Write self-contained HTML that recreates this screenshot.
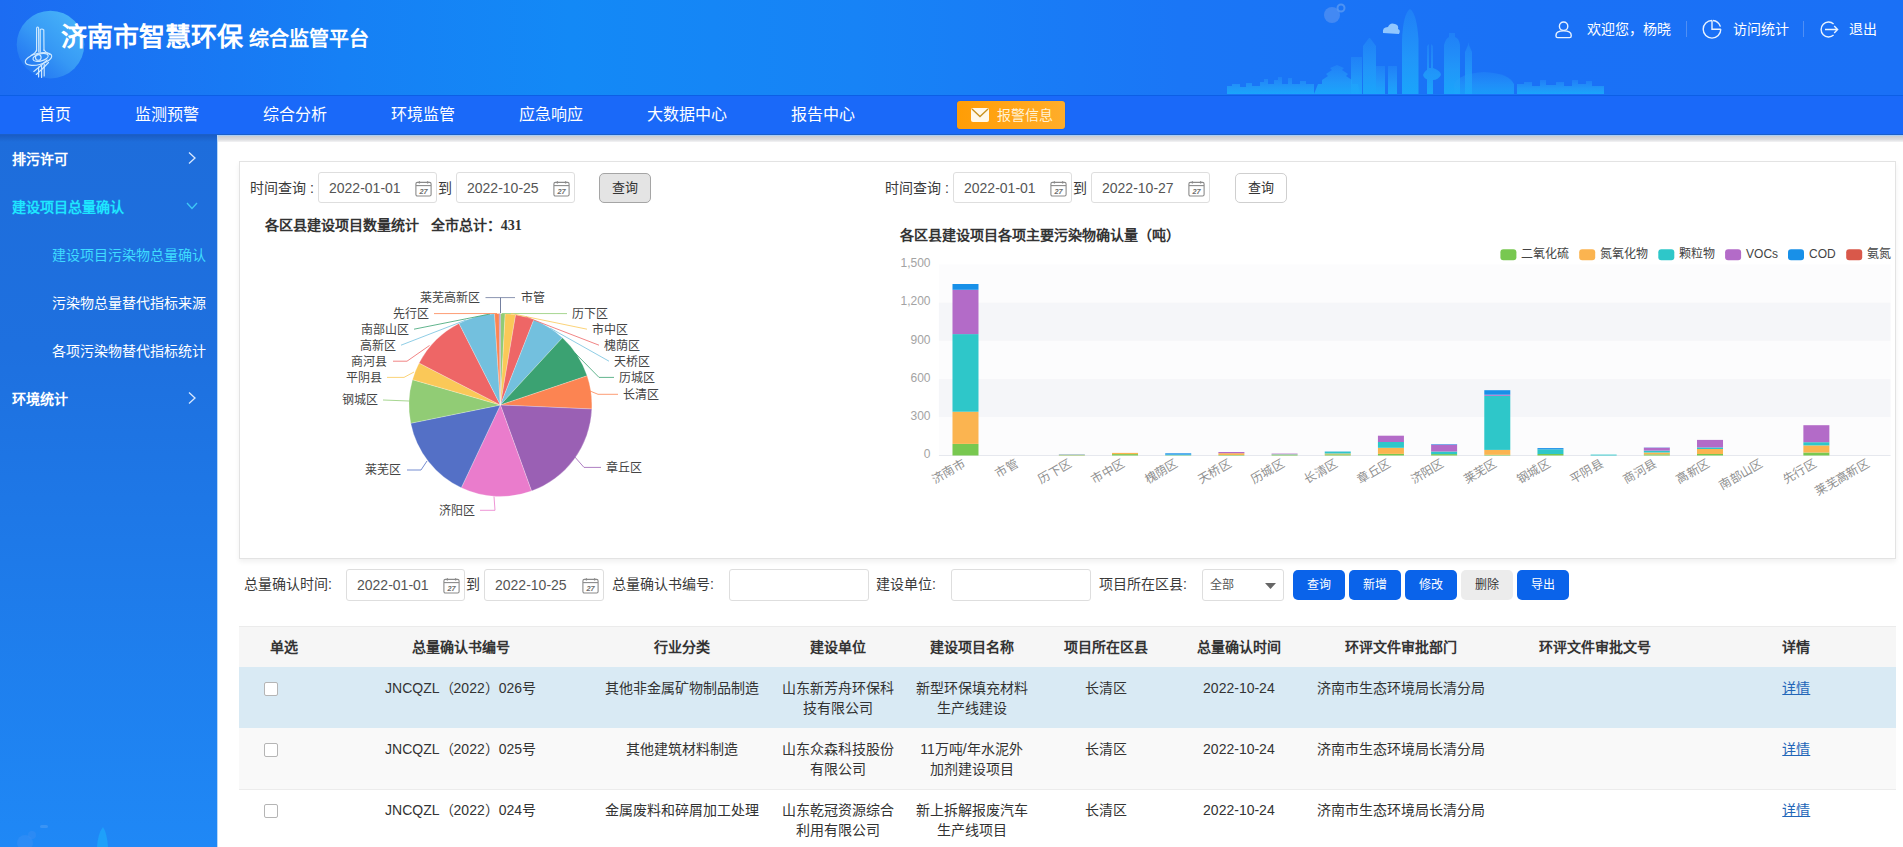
<!DOCTYPE html>
<html lang="zh-CN"><head><meta charset="utf-8">
<style>
*{margin:0;padding:0;box-sizing:border-box}
html,body{width:1903px;height:847px;overflow:hidden;background:#fff;font-family:"Liberation Sans",sans-serif;color:#333}
.abs{position:absolute}
#hdr{position:absolute;left:0;top:0;width:1903px;height:95px;background:linear-gradient(90deg,#1c6cf2 0%,#1680f5 18%,#1389f6 30%,#1783f6 45%,#1a76f6 62%,#1a71f6 80%,#1a70f6 100%)}
#nav{position:absolute;left:0;top:95px;width:1903px;height:40px;background:#1a69f9;border-top:1px solid #0c5fe6;border-bottom:1px solid #1b5fc9}
#nav .it{position:absolute;top:0;height:38px;line-height:37px;font-size:16px;color:#fff;white-space:nowrap}
#side{position:absolute;left:0;top:135px;width:217px;height:712px;background:linear-gradient(#1e6ddb 0%,#1e70df 30%,#1e7ae9 60%,#1f88f6 100%)}
#side .it{position:absolute;left:12px;font-size:14px;color:#fff;white-space:nowrap;line-height:20px}
#main{position:absolute;left:217px;top:135px;width:1686px;height:712px;background:#fff}
.lbl{font-size:14px;line-height:20px;color:#3a3a3a;white-space:nowrap}
.dinp{border:1px solid #dedede;border-radius:3px;background:#fff}
.th{width:300px;text-align:center;font-size:14px;font-weight:bold;color:#333;line-height:20px;white-space:nowrap}
.td{width:300px;text-align:center;font-size:14px;color:#333;line-height:20px;white-space:nowrap}
.cb{width:14px;height:14px;border:1px solid #b5b5b5;border-radius:2px;background:#fff}
svg text{font-family:"Liberation Sans",sans-serif}
</style></head><body>
<div id="hdr">
 <svg class="abs" style="left:0;top:0" width="1903" height="95">
  <defs>
   <linearGradient id="lg" x1="0.85" y1="0.1" x2="0.15" y2="0.9"><stop offset="0" stop-color="#46b2f9"/><stop offset="0.55" stop-color="#3698f5"/><stop offset="1" stop-color="#2a7ff2" stop-opacity="0.6"/></linearGradient>
   <linearGradient id="sk" x1="0" y1="0" x2="0" y2="1"><stop offset="0" stop-color="#2a9af9" stop-opacity="0.35"/><stop offset="0.6" stop-color="#22a0fa" stop-opacity="0.8"/><stop offset="1" stop-color="#1aa8fb" stop-opacity="0.95"/></linearGradient>
  </defs>
  <circle cx="50.5" cy="44.6" r="33.8" fill="url(#lg)"/>
  <g fill="none" stroke="#cfe9ff" stroke-width="1.15" stroke-linecap="round">
   <path d="M36.6 51 L36.6 28 Q37.6 26 38.6 28 L38.8 52"/>
   <path d="M40.2 52 L40.2 29.5 Q42 28.3 43.8 30 L44 50.5"/>
   <path d="M36.6 50 Q35.5 53.5 31 55.5"/><path d="M44 50 Q45.5 52.5 50 54.5"/>
   <ellipse cx="38.5" cy="59" rx="13.5" ry="5.6" transform="rotate(-14 38.5 59)"/>
   <ellipse cx="40.6" cy="57.4" rx="7.8" ry="3.6" transform="rotate(-14 40.6 57.4)"/>
   <circle cx="38.3" cy="57.4" r="2.8"/>
   <path d="M33.8 71.5 Q40 66.5 47.2 60"/><path d="M36.3 74.5 Q42.5 69 48.5 62.5"/>
   <path d="M38.6 67 L38.6 77"/><path d="M41.6 65.5 L41.6 77.5"/><path d="M44.2 64 L44.2 76"/>
  </g>
  <g fill="url(#sk)">
   <path d="M1227 94 L1227 86 L1232 86 L1232 84 L1240 84 L1240 87 L1246 87 L1246 83 L1252 83 L1252 86 L1260 86 L1260 82 L1264 82 L1264 79 L1268 79 L1268 84 L1274 84 L1274 80 L1278 80 L1278 77 L1282 77 L1282 84 L1288 84 L1288 78 L1292 78 L1292 84 L1300 84 L1300 81 L1306 81 L1306 84 L1314 84 L1314 94 Z"/>
   <path d="M1314 94 L1318 84 L1322 84 L1322 80 L1328 76 L1326 74 L1332 70 L1330 68 L1337 65 L1344 68 L1342 70 L1348 74 L1346 76 L1352 80 L1352 84 L1358 84 L1360 94 Z"/>
   <rect x="1351" y="57" width="11" height="37"/>
   <path d="M1363 94 L1363 46 L1369 38 L1370 38 L1376 46 L1376 94 Z"/>
   <rect x="1376" y="66" width="9" height="28"/>
   <rect x="1388" y="66" width="9" height="28"/>
   <path d="M1402 94 L1402 40 Q1403 14 1410 9 Q1417 14 1418.5 40 L1418.5 94 Z"/>
   <path d="M1427 94 L1427 46 L1429 44 L1429 68 L1431 68 L1431 44 L1433 46 L1433 68 Q1441 71 1441 75 Q1438 80 1433 80 L1433 94 Z M1423 75 Q1425 70 1429 69 L1429 80 Q1424 79 1423 75 Z"/>
   <path d="M1444 94 L1444 45 Q1446 38 1449 37 L1449 33 L1455 33 L1455 37 Q1459 38 1460 45 L1460 94 Z"/>
   <path d="M1465 94 L1465 52 L1468 45 L1468.5 42 L1469 45 L1472 52 L1472 94 Z"/>
   <path d="M1454 94 L1454 84 Q1460 73 1484 72 Q1509 73 1514 84 L1514 94 Z" opacity="0.8"/>
   <path d="M1517 94 L1517 84 L1524 84 L1524 82 L1532 82 L1532 86 L1540 86 L1540 80 L1546 80 L1546 85 L1556 85 L1556 82 L1564 82 L1564 86 L1572 86 L1572 80 L1578 80 L1578 84 L1586 84 L1586 81 L1592 81 L1592 86 L1604 86 L1604 94 Z"/>
  </g>
  <path d="M1383 33 Q1382 27 1388 27 Q1390 22 1395 24 Q1399 25 1398 29 Q1401 30 1399 34 Z" fill="#9fd0ff" opacity="0.9"/>
  <circle cx="1332" cy="15" r="8" fill="#4d8ff2" opacity="0.8"/>
  <circle cx="1341" cy="8" r="3.5" fill="none" stroke="#5a9af3" stroke-width="2" opacity="0.8"/>
  <!-- right icons -->
  <g fill="none" stroke="#e8f2ff" stroke-width="1.4">
   <circle cx="1563.6" cy="26.2" r="4.2"/>
   <path d="M1556 35.3 Q1556 30.9 1563.6 30.9 Q1571.2 30.9 1571.2 35.3 L1571.2 36 Q1571.2 37.6 1569.6 37.6 L1557.6 37.6 Q1556 37.6 1556 36 Z"/>
   <path d="M1712 20.5 A8.8 8.8 0 1 0 1720.8 29.3"/>
   <path d="M1712.8 20.5 A8.8 8.8 0 0 1 1720.4 26.6"/>
   <path d="M1712 20.5 L1712 29.3 L1720.8 29.3"/>
   <path d="M1833.6 23.9 A7.5 7.5 0 1 0 1833.6 35.1"/>
   <path d="M1825 29.5 L1837.6 29.5 M1834.2 26 L1837.6 29.5 L1834.2 33"/>
  </g>
  <rect x="1686" y="21" width="1" height="16" fill="#4f8ff5"/>
  <rect x="1803" y="21" width="1" height="16" fill="#4f8ff5"/>
 </svg>
 <div class="abs" style="left:61px;top:19px;font-size:26px;font-weight:900;color:#fff;white-space:nowrap;line-height:36px">济南市智慧环保</div>
 <div class="abs" style="left:249px;top:25px;font-size:20px;font-weight:900;color:#fff;white-space:nowrap;line-height:28px">综合监管平台</div>
 <div class="abs" style="left:1587px;top:19px;font-size:14px;color:#fff;white-space:nowrap;line-height:20px">欢迎您，杨晓</div>
 <div class="abs" style="left:1733px;top:19px;font-size:14px;color:#fff;white-space:nowrap;line-height:20px">访问统计</div>
 <div class="abs" style="left:1849px;top:19px;font-size:14px;color:#fff;white-space:nowrap;line-height:20px">退出</div>
</div>
<div id="nav">
 <div class="it" style="left:39px">首页</div>
 <div class="it" style="left:135px">监测预警</div>
 <div class="it" style="left:263px">综合分析</div>
 <div class="it" style="left:391px">环境监管</div>
 <div class="it" style="left:519px">应急响应</div>
 <div class="it" style="left:647px">大数据中心</div>
 <div class="it" style="left:791px">报告中心</div>
 <div class="abs" style="left:957px;top:5px;width:108px;height:28px;border-radius:3px;background:linear-gradient(90deg,#ff9d05,#ffad2a);box-shadow:0 0 1px rgba(0,0,0,.3)">
  <svg class="abs" style="left:14px;top:7px" width="18" height="14"><rect x="0" y="0" width="18" height="14" rx="2" fill="#fff8e8"/><path d="M1 1 L9 8.5 L17 1" fill="none" stroke="#c8901a" stroke-width="1.3"/></svg>
  <div class="abs" style="left:40px;top:4px;font-size:14px;line-height:20px;color:#fff3d6;white-space:nowrap">报警信息</div>
 </div>
</div>
<div id="side">
 <div class="abs" style="left:0;top:0;width:217px;height:7px;background:linear-gradient(#1a5cc4,rgba(30,111,220,0))"></div>
 <div class="it" style="top:14px;font-weight:bold">排污许可</div>
 <div class="it" style="top:62px;font-weight:bold;color:#1ee6ff">建设项目总量确认</div>
 <div class="it" style="top:110px;left:52px;color:#3fdcff">建设项目污染物总量确认</div>
 <div class="it" style="top:158px;left:52px">污染物总量替代指标来源</div>
 <div class="it" style="top:206px;left:52px">各项污染物替代指标统计</div>
 <div class="it" style="top:254px;font-weight:bold">环境统计</div>
 <svg class="abs" style="left:186px;top:16px" width="12" height="14"><path d="M3 1.5 L9 7 L3 12.5" fill="none" stroke="#d8e8ff" stroke-width="1.3"/></svg>
 <svg class="abs" style="left:185px;top:66px" width="14" height="10"><path d="M2 2 L7 7.5 L12 2" fill="none" stroke="#3fc8f5" stroke-width="1.3"/></svg>
 <svg class="abs" style="left:186px;top:256px" width="12" height="14"><path d="M3 1.5 L9 7 L3 12.5" fill="none" stroke="#d8e8ff" stroke-width="1.3"/></svg>
 <svg class="abs" style="left:0;top:690px" width="217" height="22"><circle cx="25" cy="18" r="8" fill="#3a8ff5" opacity="0.5"/><circle cx="32" cy="10" r="4" fill="#3a8ff5" opacity="0.45"/><rect x="40" y="0" width="8" height="3" rx="1.5" fill="#5aa3f7" opacity="0.45"/><path d="M97 22 Q98 8 103 2 Q107 8 108 22 Z" fill="#1ea6fb" opacity="0.8"/></svg>
</div>
<div id="main">
 <div class="abs" style="left:0;top:0;width:1686px;height:1px;background:#a9cdf5"></div>
 <div class="abs" style="left:0;top:1px;width:1686px;height:6px;background:linear-gradient(#c9ccd0,#dcdde0 60%,#f4f4f5)"></div>
 <div class="abs" style="left:0;top:0;width:1px;height:712px;background:#b9d8f7"></div>
</div>
<div class="abs" style="left:239px;top:161px;width:1657px;height:398px;border:1px solid #e3e3e3;background:#fff;box-shadow:0 3px 5px rgba(0,0,0,.06);overflow:hidden">
</div>
<div class="abs lbl" style="left:250px;top:178px">时间查询 :</div>
<div class="abs dinp" style="left:318px;top:172px;width:119px;height:31px"><span class="abs" style="left:10px;top:6px;line-height:18px;font-size:14px;color:#555">2022-01-01</span><span class="abs" style="left:96px;top:7px"><svg width="17" height="17" viewBox="0 0 17 17"><rect x="0.9" y="2.4" width="15.2" height="13.6" rx="1.5" fill="#fff" stroke="#8a8a8a" stroke-width="1.1"/><path d="M1 5.6 H16" stroke="#8a8a8a" stroke-width="1.1"/><path d="M4.4 1.2 V3.6 M12.6 1.2 V3.6" stroke="#8a8a8a" stroke-width="1.3"/><text x="8.6" y="13.9" font-size="7.4" font-weight="bold" font-family="Liberation Sans" font-style="italic" text-anchor="middle" fill="#6d6d6d">27</text></svg></span></div>
<div class="abs lbl" style="left:438px;top:178px">到</div>
<div class="abs dinp" style="left:456px;top:172px;width:119px;height:31px"><span class="abs" style="left:10px;top:6px;line-height:18px;font-size:14px;color:#555">2022-10-25</span><span class="abs" style="left:96px;top:7px"><svg width="17" height="17" viewBox="0 0 17 17"><rect x="0.9" y="2.4" width="15.2" height="13.6" rx="1.5" fill="#fff" stroke="#8a8a8a" stroke-width="1.1"/><path d="M1 5.6 H16" stroke="#8a8a8a" stroke-width="1.1"/><path d="M4.4 1.2 V3.6 M12.6 1.2 V3.6" stroke="#8a8a8a" stroke-width="1.3"/><text x="8.6" y="13.9" font-size="7.4" font-weight="bold" font-family="Liberation Sans" font-style="italic" text-anchor="middle" fill="#6d6d6d">27</text></svg></span></div>
<div class="abs" style="left:599px;top:173px;width:52px;height:30px;border:1px solid #a5a5a5;border-radius:5px;background:#e4e4e4;font-size:13px;line-height:28px;text-align:center;color:#333">查询</div>
<div class="abs" style="left:265px;top:215px;font-size:14px;font-weight:bold;color:#333;white-space:nowrap;line-height:20px">各区县建设项目数量统计&nbsp;&nbsp;&nbsp;全市总计：<span style="font-family:'Liberation Serif',serif">431</span></div>
<div class="abs lbl" style="left:885px;top:178px">时间查询 :</div>
<div class="abs dinp" style="left:953px;top:172px;width:119px;height:31px"><span class="abs" style="left:10px;top:6px;line-height:18px;font-size:14px;color:#555">2022-01-01</span><span class="abs" style="left:96px;top:7px"><svg width="17" height="17" viewBox="0 0 17 17"><rect x="0.9" y="2.4" width="15.2" height="13.6" rx="1.5" fill="#fff" stroke="#8a8a8a" stroke-width="1.1"/><path d="M1 5.6 H16" stroke="#8a8a8a" stroke-width="1.1"/><path d="M4.4 1.2 V3.6 M12.6 1.2 V3.6" stroke="#8a8a8a" stroke-width="1.3"/><text x="8.6" y="13.9" font-size="7.4" font-weight="bold" font-family="Liberation Sans" font-style="italic" text-anchor="middle" fill="#6d6d6d">27</text></svg></span></div>
<div class="abs lbl" style="left:1073px;top:178px">到</div>
<div class="abs dinp" style="left:1091px;top:172px;width:119px;height:31px"><span class="abs" style="left:10px;top:6px;line-height:18px;font-size:14px;color:#555">2022-10-27</span><span class="abs" style="left:96px;top:7px"><svg width="17" height="17" viewBox="0 0 17 17"><rect x="0.9" y="2.4" width="15.2" height="13.6" rx="1.5" fill="#fff" stroke="#8a8a8a" stroke-width="1.1"/><path d="M1 5.6 H16" stroke="#8a8a8a" stroke-width="1.1"/><path d="M4.4 1.2 V3.6 M12.6 1.2 V3.6" stroke="#8a8a8a" stroke-width="1.3"/><text x="8.6" y="13.9" font-size="7.4" font-weight="bold" font-family="Liberation Sans" font-style="italic" text-anchor="middle" fill="#6d6d6d">27</text></svg></span></div>
<div class="abs" style="left:1235px;top:173px;width:52px;height:30px;border:1px solid #cfcfcf;border-radius:5px;background:#fff;font-size:13px;line-height:28px;text-align:center;color:#333">查询</div>
<div class="abs" style="left:900px;top:225px;font-size:14px;font-weight:bold;color:#333;white-space:nowrap;line-height:20px">各区县建设项目各项主要污染物确认量（吨）</div>
<svg class="abs" style="left:0;top:0" width="1903" height="847" viewBox="0 0 1903 847">
<path d="M500.4 405.0 L500.40 313.50 A91.5 91.5 0 0 1 505.19 313.63 Z" fill="#91cc75" stroke="#ffffff" stroke-opacity="0.7" stroke-width="0.35" stroke-linejoin="round"/>
<path d="M500.4 405.0 L505.19 313.63 A91.5 91.5 0 0 1 515.66 314.78 Z" fill="#fac858" stroke="#ffffff" stroke-opacity="0.7" stroke-width="0.35" stroke-linejoin="round"/>
<path d="M500.4 405.0 L515.66 314.78 A91.5 91.5 0 0 1 533.79 319.81 Z" fill="#ee6666" stroke="#ffffff" stroke-opacity="0.7" stroke-width="0.35" stroke-linejoin="round"/>
<path d="M500.4 405.0 L533.79 319.81 A91.5 91.5 0 0 1 562.45 337.76 Z" fill="#73c0de" stroke="#ffffff" stroke-opacity="0.7" stroke-width="0.35" stroke-linejoin="round"/>
<path d="M500.4 405.0 L562.45 337.76 A91.5 91.5 0 0 1 587.12 375.82 Z" fill="#3ba272" stroke="#ffffff" stroke-opacity="0.7" stroke-width="0.35" stroke-linejoin="round"/>
<path d="M500.4 405.0 L587.12 375.82 A91.5 91.5 0 0 1 591.81 408.99 Z" fill="#fc8452" stroke="#ffffff" stroke-opacity="0.7" stroke-width="0.35" stroke-linejoin="round"/>
<path d="M500.4 405.0 L591.81 408.99 A91.5 91.5 0 0 1 531.54 491.04 Z" fill="#9a60b4" stroke="#ffffff" stroke-opacity="0.7" stroke-width="0.35" stroke-linejoin="round"/>
<path d="M500.4 405.0 L531.54 491.04 A91.5 91.5 0 0 1 461.30 487.72 Z" fill="#ea7ccc" stroke="#ffffff" stroke-opacity="0.7" stroke-width="0.35" stroke-linejoin="round"/>
<path d="M500.4 405.0 L461.30 487.72 A91.5 91.5 0 0 1 410.74 423.24 Z" fill="#5470c6" stroke="#ffffff" stroke-opacity="0.7" stroke-width="0.35" stroke-linejoin="round"/>
<path d="M500.4 405.0 L410.74 423.24 A91.5 91.5 0 0 1 412.49 379.63 Z" fill="#91cc75" stroke="#ffffff" stroke-opacity="0.7" stroke-width="0.35" stroke-linejoin="round"/>
<path d="M500.4 405.0 L412.49 379.63 A91.5 91.5 0 0 1 419.09 363.03 Z" fill="#fac858" stroke="#ffffff" stroke-opacity="0.7" stroke-width="0.35" stroke-linejoin="round"/>
<path d="M500.4 405.0 L419.09 363.03 A91.5 91.5 0 0 1 459.00 323.40 Z" fill="#ee6666" stroke="#ffffff" stroke-opacity="0.7" stroke-width="0.35" stroke-linejoin="round"/>
<path d="M500.4 405.0 L459.00 323.40 A91.5 91.5 0 0 1 494.50 313.69 Z" fill="#73c0de" stroke="#ffffff" stroke-opacity="0.7" stroke-width="0.35" stroke-linejoin="round"/>
<path d="M500.4 405.0 L494.50 313.69 A91.5 91.5 0 0 1 499.28 313.51 Z" fill="#fc8452" stroke="#ffffff" stroke-opacity="0.7" stroke-width="0.35" stroke-linejoin="round"/>
<path d="M500.4 405.0 L499.28 313.51 A91.5 91.5 0 0 1 500.40 313.50 Z" fill="#9a60b4" stroke="#ffffff" stroke-opacity="0.7" stroke-width="0.35" stroke-linejoin="round"/>
<polyline points="500.5,313 500.5,297.6 515,297.6" fill="none" stroke="#6e7a9c" stroke-width="1" stroke-opacity="0.8"/>
<polyline points="500.5,313 500.5,297.6 485.5,297.6" fill="none" stroke="#6e7a9c" stroke-width="1" stroke-opacity="0.8"/>
<polyline points="502,313.5 567,313.6" fill="none" stroke="#91cc75" stroke-width="1" stroke-opacity="0.8"/>
<polyline points="511,313.5 587,329.2" fill="none" stroke="#fac858" stroke-width="1" stroke-opacity="0.8"/>
<polyline points="526,317 599,345.2" fill="none" stroke="#ee6666" stroke-width="1" stroke-opacity="0.8"/>
<polyline points="550,328 609,361.2" fill="none" stroke="#73c0de" stroke-width="1" stroke-opacity="0.8"/>
<polyline points="575,353 599,377.4 614,377.4" fill="none" stroke="#3ba272" stroke-width="1" stroke-opacity="0.8"/>
<polyline points="590,391 598,394.3 618,394.3" fill="none" stroke="#fc8452" stroke-width="1" stroke-opacity="0.8"/>
<polyline points="574,456 584,467.4 601,467.4" fill="none" stroke="#9a60b4" stroke-width="1" stroke-opacity="0.8"/>
<polyline points="494,496.5 495,510.3 480,510.3" fill="none" stroke="#ea7ccc" stroke-width="1" stroke-opacity="0.8"/>
<polyline points="427,461 421,470 407,470" fill="none" stroke="#5470c6" stroke-width="1" stroke-opacity="0.8"/>
<polyline points="409,401 383,400" fill="none" stroke="#91cc75" stroke-width="1" stroke-opacity="0.8"/>
<polyline points="414,372 404,377.4 387,377.4" fill="none" stroke="#fac858" stroke-width="1" stroke-opacity="0.8"/>
<polyline points="429.5,345.5 407,361.2 393,361.2" fill="none" stroke="#ee6666" stroke-width="1" stroke-opacity="0.8"/>
<polyline points="466,320 401,345.2" fill="none" stroke="#73c0de" stroke-width="1" stroke-opacity="0.8"/>
<polyline points="490,314 414,329.2" fill="none" stroke="#3ba272" stroke-width="1" stroke-opacity="0.8"/>
<polyline points="497,313.5 434,313.6" fill="none" stroke="#fc8452" stroke-width="1" stroke-opacity="0.8"/>
<text x="520.5" y="301.90000000000003" font-size="12" fill="#444" text-anchor="start">市管</text>
<text x="480" y="301.90000000000003" font-size="12" fill="#444" text-anchor="end">莱芜高新区</text>
<text x="571.5" y="317.90000000000003" font-size="12" fill="#444" text-anchor="start">历下区</text>
<text x="592" y="333.5" font-size="12" fill="#444" text-anchor="start">市中区</text>
<text x="604" y="349.5" font-size="12" fill="#444" text-anchor="start">槐荫区</text>
<text x="613.5" y="365.5" font-size="12" fill="#444" text-anchor="start">天桥区</text>
<text x="618.5" y="381.7" font-size="12" fill="#444" text-anchor="start">历城区</text>
<text x="622.5" y="398.6" font-size="12" fill="#444" text-anchor="start">长清区</text>
<text x="606" y="471.7" font-size="12" fill="#444" text-anchor="start">章丘区</text>
<text x="474.5" y="514.6" font-size="12" fill="#444" text-anchor="end">济阳区</text>
<text x="400.5" y="473.8" font-size="12" fill="#444" text-anchor="end">莱芜区</text>
<text x="378" y="404.1" font-size="12" fill="#444" text-anchor="end">钢城区</text>
<text x="381.5" y="381.7" font-size="12" fill="#444" text-anchor="end">平阴县</text>
<text x="387" y="365.5" font-size="12" fill="#444" text-anchor="end">商河县</text>
<text x="395.5" y="349.5" font-size="12" fill="#444" text-anchor="end">高新区</text>
<text x="408.5" y="333.5" font-size="12" fill="#444" text-anchor="end">南部山区</text>
<text x="428.5" y="317.90000000000003" font-size="12" fill="#444" text-anchor="end">先行区</text>
<rect x="938.9" y="264.50" width="951.6" height="38.20" fill="#fcfcfd"/>
<rect x="938.9" y="302.70" width="951.6" height="38.20" fill="#f5f6f9"/>
<rect x="938.9" y="340.90" width="951.6" height="38.20" fill="#fcfcfd"/>
<rect x="938.9" y="379.10" width="951.6" height="38.20" fill="#f5f6f9"/>
<rect x="938.9" y="417.30" width="951.6" height="38.20" fill="#fcfcfd"/>
<rect x="938.9" y="455.0" width="951.6" height="1" fill="#e6e8ee"/>
<text x="930.5" y="267.20" font-size="12" fill="#a3a3a3" text-anchor="end">1,500</text>
<text x="930.5" y="305.40" font-size="12" fill="#a3a3a3" text-anchor="end">1,200</text>
<text x="930.5" y="343.60" font-size="12" fill="#a3a3a3" text-anchor="end">900</text>
<text x="930.5" y="381.80" font-size="12" fill="#a3a3a3" text-anchor="end">600</text>
<text x="930.5" y="420.00" font-size="12" fill="#a3a3a3" text-anchor="end">300</text>
<text x="930.5" y="458.20" font-size="12" fill="#a3a3a3" text-anchor="end">0</text>
<rect x="952.49" y="443.90" width="26" height="11.60" fill="#78c850"/>
<rect x="952.49" y="411.70" width="26" height="32.20" fill="#fbb450"/>
<rect x="952.49" y="334.10" width="26" height="77.60" fill="#2ec7c9"/>
<rect x="952.49" y="289.80" width="26" height="44.30" fill="#b36bc8"/>
<rect x="952.49" y="284.00" width="26" height="5.80" fill="#1890e8"/>
<rect x="1058.85" y="455.10" width="26" height="0.40" fill="#78c850"/>
<rect x="1058.85" y="454.70" width="26" height="0.40" fill="#fbb450"/>
<rect x="1058.85" y="454.40" width="26" height="0.30" fill="#1890e8"/>
<rect x="1112.03" y="454.10" width="26" height="1.40" fill="#78c850"/>
<rect x="1112.03" y="452.90" width="26" height="1.20" fill="#fbb450"/>
<rect x="1165.21" y="455.20" width="26" height="0.30" fill="#78c850"/>
<rect x="1165.21" y="454.60" width="26" height="0.60" fill="#2ec7c9"/>
<rect x="1165.21" y="453.30" width="26" height="1.30" fill="#1890e8"/>
<rect x="1218.39" y="455.00" width="26" height="0.50" fill="#78c850"/>
<rect x="1218.39" y="453.20" width="26" height="1.80" fill="#fbb450"/>
<rect x="1218.39" y="452.00" width="26" height="1.20" fill="#b36bc8"/>
<rect x="1271.57" y="455.00" width="26" height="0.50" fill="#78c850"/>
<rect x="1271.57" y="454.50" width="26" height="0.50" fill="#fbb450"/>
<rect x="1271.57" y="454.10" width="26" height="0.40" fill="#2ec7c9"/>
<rect x="1271.57" y="453.60" width="26" height="0.50" fill="#b36bc8"/>
<rect x="1324.75" y="454.30" width="26" height="1.20" fill="#78c850"/>
<rect x="1324.75" y="453.50" width="26" height="0.80" fill="#fbb450"/>
<rect x="1324.75" y="451.70" width="26" height="1.80" fill="#2ec7c9"/>
<rect x="1324.75" y="451.50" width="26" height="0.20" fill="#1890e8"/>
<rect x="1377.93" y="453.90" width="26" height="1.60" fill="#78c850"/>
<rect x="1377.93" y="447.80" width="26" height="6.10" fill="#fbb450"/>
<rect x="1377.93" y="442.00" width="26" height="5.80" fill="#2ec7c9"/>
<rect x="1377.93" y="435.70" width="26" height="6.30" fill="#b36bc8"/>
<rect x="1431.11" y="454.10" width="26" height="1.40" fill="#78c850"/>
<rect x="1431.11" y="451.50" width="26" height="2.60" fill="#2ec7c9"/>
<rect x="1431.11" y="444.60" width="26" height="6.90" fill="#b36bc8"/>
<rect x="1431.11" y="444.10" width="26" height="0.50" fill="#1890e8"/>
<rect x="1484.29" y="454.80" width="26" height="0.70" fill="#78c850"/>
<rect x="1484.29" y="449.90" width="26" height="4.90" fill="#fbb450"/>
<rect x="1484.29" y="395.80" width="26" height="54.10" fill="#2ec7c9"/>
<rect x="1484.29" y="394.70" width="26" height="1.10" fill="#b36bc8"/>
<rect x="1484.29" y="390.20" width="26" height="4.50" fill="#1890e8"/>
<rect x="1537.47" y="454.00" width="26" height="1.50" fill="#78c850"/>
<rect x="1537.47" y="449.40" width="26" height="4.60" fill="#2ec7c9"/>
<rect x="1537.47" y="448.10" width="26" height="1.30" fill="#1890e8"/>
<rect x="1590.65" y="454.60" width="26" height="0.90" fill="#2ec7c9"/>
<rect x="1643.83" y="454.30" width="26" height="1.20" fill="#78c850"/>
<rect x="1643.83" y="452.50" width="26" height="1.80" fill="#fbb450"/>
<rect x="1643.83" y="450.60" width="26" height="1.90" fill="#2ec7c9"/>
<rect x="1643.83" y="447.70" width="26" height="2.90" fill="#b36bc8"/>
<rect x="1643.83" y="447.50" width="26" height="0.20" fill="#1890e8"/>
<rect x="1697.01" y="454.00" width="26" height="1.50" fill="#78c850"/>
<rect x="1697.01" y="449.00" width="26" height="5.00" fill="#fbb450"/>
<rect x="1697.01" y="447.40" width="26" height="1.60" fill="#2ec7c9"/>
<rect x="1697.01" y="439.90" width="26" height="7.50" fill="#b36bc8"/>
<rect x="1803.37" y="452.50" width="26" height="3.00" fill="#78c850"/>
<rect x="1803.37" y="445.40" width="26" height="7.10" fill="#fbb450"/>
<rect x="1803.37" y="442.20" width="26" height="3.20" fill="#2ec7c9"/>
<rect x="1803.37" y="425.20" width="26" height="17.00" fill="#b36bc8"/>
<text transform="translate(964.49,463.5) rotate(-30)" font-size="12" fill="#8f8f8f" text-anchor="end" dominant-baseline="middle">济南市</text>
<text transform="translate(1017.67,463.5) rotate(-30)" font-size="12" fill="#8f8f8f" text-anchor="end" dominant-baseline="middle">市管</text>
<text transform="translate(1070.85,463.5) rotate(-30)" font-size="12" fill="#8f8f8f" text-anchor="end" dominant-baseline="middle">历下区</text>
<text transform="translate(1124.03,463.5) rotate(-30)" font-size="12" fill="#8f8f8f" text-anchor="end" dominant-baseline="middle">市中区</text>
<text transform="translate(1177.21,463.5) rotate(-30)" font-size="12" fill="#8f8f8f" text-anchor="end" dominant-baseline="middle">槐荫区</text>
<text transform="translate(1230.39,463.5) rotate(-30)" font-size="12" fill="#8f8f8f" text-anchor="end" dominant-baseline="middle">天桥区</text>
<text transform="translate(1283.57,463.5) rotate(-30)" font-size="12" fill="#8f8f8f" text-anchor="end" dominant-baseline="middle">历城区</text>
<text transform="translate(1336.75,463.5) rotate(-30)" font-size="12" fill="#8f8f8f" text-anchor="end" dominant-baseline="middle">长清区</text>
<text transform="translate(1389.93,463.5) rotate(-30)" font-size="12" fill="#8f8f8f" text-anchor="end" dominant-baseline="middle">章丘区</text>
<text transform="translate(1443.11,463.5) rotate(-30)" font-size="12" fill="#8f8f8f" text-anchor="end" dominant-baseline="middle">济阳区</text>
<text transform="translate(1496.29,463.5) rotate(-30)" font-size="12" fill="#8f8f8f" text-anchor="end" dominant-baseline="middle">莱芜区</text>
<text transform="translate(1549.47,463.5) rotate(-30)" font-size="12" fill="#8f8f8f" text-anchor="end" dominant-baseline="middle">钢城区</text>
<text transform="translate(1602.65,463.5) rotate(-30)" font-size="12" fill="#8f8f8f" text-anchor="end" dominant-baseline="middle">平阴县</text>
<text transform="translate(1655.83,463.5) rotate(-30)" font-size="12" fill="#8f8f8f" text-anchor="end" dominant-baseline="middle">商河县</text>
<text transform="translate(1709.01,463.5) rotate(-30)" font-size="12" fill="#8f8f8f" text-anchor="end" dominant-baseline="middle">高新区</text>
<text transform="translate(1762.19,463.5) rotate(-30)" font-size="12" fill="#8f8f8f" text-anchor="end" dominant-baseline="middle">南部山区</text>
<text transform="translate(1815.37,463.5) rotate(-30)" font-size="12" fill="#8f8f8f" text-anchor="end" dominant-baseline="middle">先行区</text>
<text transform="translate(1868.55,463.5) rotate(-30)" font-size="12" fill="#8f8f8f" text-anchor="end" dominant-baseline="middle">莱芜高新区</text>
<rect x="1500.4" y="249.3" width="16" height="11" rx="3" fill="#78c850"/>
<text x="1521.4" y="258.3" font-size="12" fill="#444">二氧化硫</text>
<rect x="1579.2" y="249.3" width="16" height="11" rx="3" fill="#fbb450"/>
<text x="1600.2" y="258.3" font-size="12" fill="#444">氮氧化物</text>
<rect x="1658.3" y="249.3" width="16" height="11" rx="3" fill="#2ec7c9"/>
<text x="1679.3" y="258.3" font-size="12" fill="#444">颗粒物</text>
<rect x="1725.1" y="249.3" width="16" height="11" rx="3" fill="#b36bc8"/>
<text x="1746.1" y="258.3" font-size="12" fill="#444">VOCs</text>
<rect x="1788" y="249.3" width="16" height="11" rx="3" fill="#1890e8"/>
<text x="1809" y="258.3" font-size="12" fill="#444">COD</text>
<rect x="1846.2" y="249.3" width="16" height="11" rx="3" fill="#d9584a"/>
<text x="1867.2" y="258.3" font-size="12" fill="#444">氨氮</text>
</svg>
<div class="abs lbl" style="left:244px;top:574px">总量确认时间:</div>
<div class="abs dinp" style="left:346px;top:569px;width:119px;height:32px"><span class="abs" style="left:10px;top:6px;line-height:18px;font-size:14px;color:#555">2022-01-01</span><span class="abs" style="left:96px;top:7px"><svg width="17" height="17" viewBox="0 0 17 17"><rect x="0.9" y="2.4" width="15.2" height="13.6" rx="1.5" fill="#fff" stroke="#8a8a8a" stroke-width="1.1"/><path d="M1 5.6 H16" stroke="#8a8a8a" stroke-width="1.1"/><path d="M4.4 1.2 V3.6 M12.6 1.2 V3.6" stroke="#8a8a8a" stroke-width="1.3"/><text x="8.6" y="13.9" font-size="7.4" font-weight="bold" font-family="Liberation Sans" font-style="italic" text-anchor="middle" fill="#6d6d6d">27</text></svg></span></div>
<div class="abs lbl" style="left:466px;top:574px">到</div>
<div class="abs dinp" style="left:484px;top:569px;width:120px;height:32px"><span class="abs" style="left:10px;top:6px;line-height:18px;font-size:14px;color:#555">2022-10-25</span><span class="abs" style="left:97px;top:7px"><svg width="17" height="17" viewBox="0 0 17 17"><rect x="0.9" y="2.4" width="15.2" height="13.6" rx="1.5" fill="#fff" stroke="#8a8a8a" stroke-width="1.1"/><path d="M1 5.6 H16" stroke="#8a8a8a" stroke-width="1.1"/><path d="M4.4 1.2 V3.6 M12.6 1.2 V3.6" stroke="#8a8a8a" stroke-width="1.3"/><text x="8.6" y="13.9" font-size="7.4" font-weight="bold" font-family="Liberation Sans" font-style="italic" text-anchor="middle" fill="#6d6d6d">27</text></svg></span></div>
<div class="abs lbl" style="left:612px;top:574px">总量确认书编号:</div>
<div class="abs dinp" style="left:729px;top:569px;width:140px;height:32px"></div>
<div class="abs lbl" style="left:876px;top:574px">建设单位:</div>
<div class="abs dinp" style="left:951px;top:569px;width:140px;height:32px"></div>
<div class="abs lbl" style="left:1099px;top:574px">项目所在区县:</div>
<div class="abs dinp" style="left:1202px;top:569px;width:82px;height:32px"><span class="abs" style="left:7px;top:6px;font-size:12px;line-height:18px;color:#555">全部</span><svg class="abs" style="left:62px;top:13px" width="11" height="7"><path d="M0 0 L11 0 L5.5 6 Z" fill="#666"/></svg></div>
<div class="abs" style="left:1293px;top:570px;width:52px;height:30px;border-radius:5px;background:#0a63ea;color:#fff;font-size:12px;line-height:30px;text-align:center">查询</div>
<div class="abs" style="left:1349px;top:570px;width:52px;height:30px;border-radius:5px;background:#0a63ea;color:#fff;font-size:12px;line-height:30px;text-align:center">新增</div>
<div class="abs" style="left:1405px;top:570px;width:52px;height:30px;border-radius:5px;background:#0a63ea;color:#fff;font-size:12px;line-height:30px;text-align:center">修改</div>
<div class="abs" style="left:1461px;top:570px;width:52px;height:30px;border-radius:5px;background:#ececec;color:#333;font-size:12px;line-height:30px;text-align:center">删除</div>
<div class="abs" style="left:1517px;top:570px;width:52px;height:30px;border-radius:5px;background:#0a63ea;color:#fff;font-size:12px;line-height:30px;text-align:center">导出</div>
<div class="abs" style="left:239px;top:626px;width:1657px;height:41px;background:#f6f6f6;border-top:1px solid #ebebeb"></div>
<div class="abs" style="left:239px;top:667px;width:1657px;height:61px;background:#d9eaf4"></div>
<div class="abs" style="left:239px;top:728px;width:1657px;height:61px;background:#f9f9f9"></div>
<div class="abs" style="left:239px;top:789px;width:1657px;height:1px;background:#ececec"></div>
<div class="abs th" style="left:134px;top:637px">单选</div>
<div class="abs th" style="left:310.6px;top:637px">总量确认书编号</div>
<div class="abs th" style="left:532.4px;top:637px">行业分类</div>
<div class="abs th" style="left:688.3px;top:637px">建设单位</div>
<div class="abs th" style="left:821.5px;top:637px">建设项目名称</div>
<div class="abs th" style="left:955.5999999999999px;top:637px">项目所在区县</div>
<div class="abs th" style="left:1088.9px;top:637px">总量确认时间</div>
<div class="abs th" style="left:1250.8px;top:637px">环评文件审批部门</div>
<div class="abs th" style="left:1445.3px;top:637px">环评文件审批文号</div>
<div class="abs th" style="left:1646.3px;top:637px">详情</div>
<div class="abs cb" style="left:264px;top:682px"></div>
<div class="abs td" style="left:310.6px;top:678px">JNCQZL（2022）026号</div>
<div class="abs td" style="left:532.4px;top:678px">其他非金属矿物制品制造</div>
<div class="abs td" style="left:688.3px;top:678px">山东新芳舟环保科<br>技有限公司</div>
<div class="abs td" style="left:821.5px;top:678px">新型环保填充材料<br>生产线建设</div>
<div class="abs td" style="left:955.5999999999999px;top:678px">长清区</div>
<div class="abs td" style="left:1088.9px;top:678px">2022-10-24</div>
<div class="abs td" style="left:1250.8px;top:678px">济南市生态环境局长清分局</div>
<div class="abs td" style="left:1646.3px;top:678px"><span style="color:#2266b8;text-decoration:underline">详情</span></div>
<div class="abs cb" style="left:264px;top:743px"></div>
<div class="abs td" style="left:310.6px;top:739px">JNCQZL（2022）025号</div>
<div class="abs td" style="left:532.4px;top:739px">其他建筑材料制造</div>
<div class="abs td" style="left:688.3px;top:739px">山东众森科技股份<br>有限公司</div>
<div class="abs td" style="left:821.5px;top:739px">11万吨/年水泥外<br>加剂建设项目</div>
<div class="abs td" style="left:955.5999999999999px;top:739px">长清区</div>
<div class="abs td" style="left:1088.9px;top:739px">2022-10-24</div>
<div class="abs td" style="left:1250.8px;top:739px">济南市生态环境局长清分局</div>
<div class="abs td" style="left:1646.3px;top:739px"><span style="color:#2266b8;text-decoration:underline">详情</span></div>
<div class="abs cb" style="left:264px;top:804px"></div>
<div class="abs td" style="left:310.6px;top:800px">JNCQZL（2022）024号</div>
<div class="abs td" style="left:532.4px;top:800px">金属废料和碎屑加工处理</div>
<div class="abs td" style="left:688.3px;top:800px">山东乾冠资源综合<br>利用有限公司</div>
<div class="abs td" style="left:821.5px;top:800px">新上拆解报废汽车<br>生产线项目</div>
<div class="abs td" style="left:955.5999999999999px;top:800px">长清区</div>
<div class="abs td" style="left:1088.9px;top:800px">2022-10-24</div>
<div class="abs td" style="left:1250.8px;top:800px">济南市生态环境局长清分局</div>
<div class="abs td" style="left:1646.3px;top:800px"><span style="color:#2266b8;text-decoration:underline">详情</span></div>
</body></html>
